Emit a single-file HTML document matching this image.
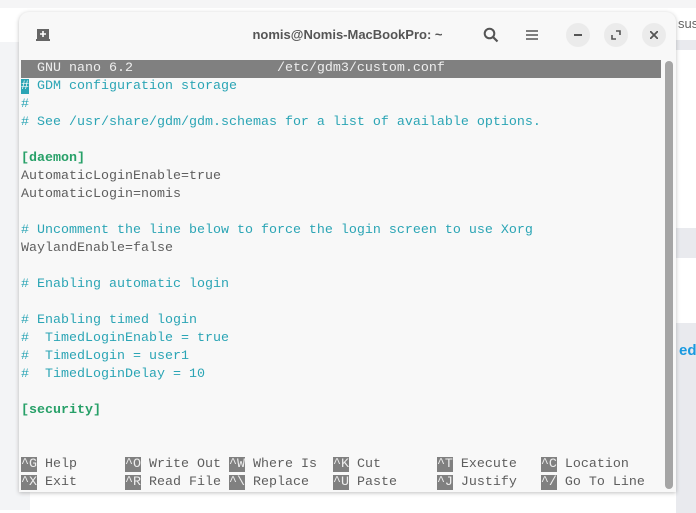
<!DOCTYPE html>
<html><head><style>
body{margin:0;width:696px;height:510px;overflow:hidden;background:#fff;position:relative;font-family:"Liberation Sans",sans-serif}
.bg1{position:absolute;left:0;top:0;width:696px;height:8px;background:#f5f5f6}
.bg2{position:absolute;left:0;top:42px;width:30px;height:468px;background:#f3f4f6}
.bg3{position:absolute;left:670px;top:40px;width:26px;height:470px;background:#fff}
.band{position:absolute;left:676px;width:20px;background:#e9eaee}
.win{position:absolute;left:19px;top:12px;width:657px;height:480px;background:#f8f8f8;border-radius:10px 10px 0 0;box-shadow:0 1px 4px rgba(0,0,0,.25)}
.title{position:absolute;left:0;top:0;width:657px;height:46px;text-align:center;line-height:46px;font-weight:bold;font-size:13px;color:#555}
.btn{position:absolute;top:11px;width:24px;height:24px;border-radius:12px;background:#ebebeb}
.term{position:absolute;left:2px;top:46px;font-family:"Liberation Mono",monospace;font-size:13.33px;line-height:18px;color:#5e5e5e;white-space:pre}
.hdr{background:#808080;color:#eee;width:640px;display:block}
.c{color:#2ba5b5}.g{color:#27a068;font-weight:bold}
.k{background:#808080;color:#eee}
.sb{position:absolute;left:646px;top:49px;width:8px;height:428px;background:#a5a5a5;border-radius:4px}
</style></head><body>
<div class="bg1"></div><div class="bg2"></div><div class="bg3"></div>
<div class="band" style="top:40px;height:10px"></div>
<div class="band" style="top:228px;height:30px"></div>
<div class="band" style="top:323px;height:190px"></div>
<div style="position:absolute;left:679px;top:342px;color:#1a9ae0;font-weight:bold;font-size:15px">ed</div>
<div style="position:absolute;left:678px;top:16px;color:#666;font-size:13px">sus</div>
<div class="win">
 <div class="title">nomis@Nomis-MacBookPro: ~</div>
 <svg style="position:absolute;left:16px;top:16px" width="16" height="14" viewBox="0 0 16 14"><path d="M2 1h12v10h1v2H1v-2h1z" fill="#666"/><path d="M8 3v6M5 6h6" stroke="#fff" stroke-width="1.6"/></svg>
 <svg style="position:absolute;left:464px;top:15px" width="16" height="16" viewBox="0 0 16 16"><circle cx="6.5" cy="6.5" r="4.8" stroke="#555" stroke-width="2" fill="none"/><path d="M10 10l4.5 4.5" stroke="#555" stroke-width="2.2"/></svg>
 <svg style="position:absolute;left:507px;top:17px" width="12" height="12" viewBox="0 0 12 12"><path d="M0 2h12M0 6h12M0 10h12" stroke="#555" stroke-width="1.6"/></svg>
 <div class="btn" style="left:547px"><div style="position:absolute;left:8px;top:11px;width:8px;height:2px;background:#555"></div></div>
 <div class="btn" style="left:585px"><svg style="position:absolute;left:7px;top:7px" width="10" height="10" viewBox="0 0 10 10"><path d="M5 1h4v4M1 5v4h4" stroke="#555" stroke-width="1.6" fill="none"/></svg></div>
 <div class="btn" style="left:623px"><svg style="position:absolute;left:8px;top:8px" width="8" height="8" viewBox="0 0 8 8"><path d="M0 0l8 8M8 0l-8 8" stroke="#555" stroke-width="1.8"/></svg></div>
 <div class="term" style="top:48px"><span class="hdr">  GNU nano 6.2                  /etc/gdm3/custom.conf                               </span><span class="c"><span style="background:#2ba5b5;color:#f8f8f8">#</span> GDM configuration storage
#
# See /usr/share/gdm/gdm.schemas for a list of available options.</span>

<span class="g">[daemon]</span>
AutomaticLoginEnable=true
AutomaticLogin=nomis

<span class="c"># Uncomment the line below to force the login screen to use Xorg</span>
WaylandEnable=false

<span class="c"># Enabling automatic login</span>

<span class="c"># Enabling timed login
#  TimedLoginEnable = true
#  TimedLogin = user1
#  TimedLoginDelay = 10</span>

<span class="g">[security]</span>


<span class="k">^G</span> Help      <span class="k">^O</span> Write Out <span class="k">^W</span> Where Is  <span class="k">^K</span> Cut       <span class="k">^T</span> Execute   <span class="k">^C</span> Location
<span class="k">^X</span> Exit      <span class="k">^R</span> Read File <span class="k">^\</span> Replace   <span class="k">^U</span> Paste     <span class="k">^J</span> Justify   <span class="k">^/</span> Go To Line</div>
 <div class="sb"></div>
</div>
</body></html>
